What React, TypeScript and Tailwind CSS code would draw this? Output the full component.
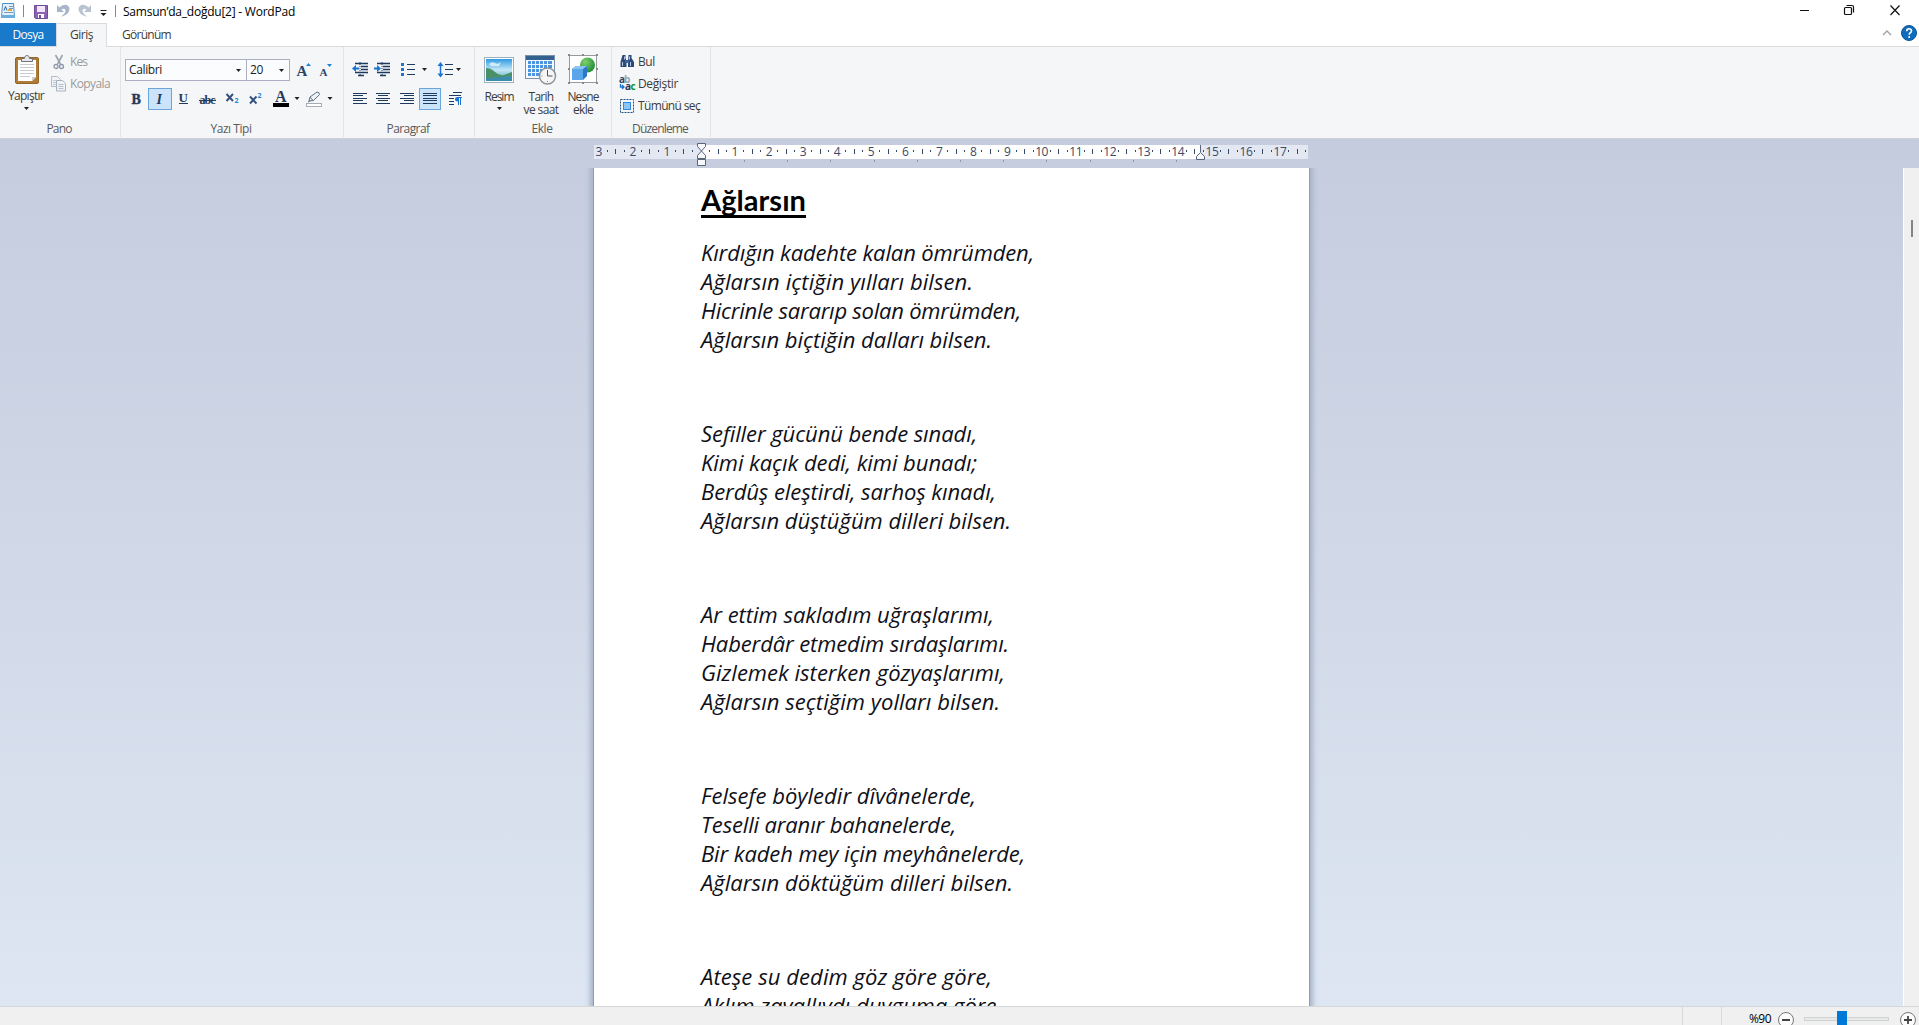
import React, { useLayoutEffect, useRef, useState } from "react";
import { clsx } from "clsx";

// Text that is tracked so it fills exactly `width` pixels
const Fit = ({
  width,
  className,
  children,
}: {
  width: number;
  className?: string;
  children: string;
}) => {
  const ref = useRef<HTMLSpanElement>(null);
  const [spacing, setSpacing] = useState(0);

  useLayoutEffect(() => {
    if (!ref.current) return;
    const natural = ref.current.getBoundingClientRect().width;
    setSpacing((width - natural) / children.length);
  }, []);

  return (
    <span
      ref={ref}
      className={clsx("inline-block whitespace-pre", className)}
      style={{ letterSpacing: spacing }}
    >
      {children}
    </span>
  );
};

const Arrow = ({ className }: { className?: string }) => (
  <svg width="5" height="3" viewBox="0 0 5 3" className={clsx("shrink-0", className)}>
    <path d="M0 0h5L2.5 3z" fill="#222" />
  </svg>
);

const TitleBar = () => (
  <header className="flex h-[23px] items-start bg-white">
    <svg width="118" height="23" viewBox="0 0 118 23" className="shrink-0">
      {/* document icon */}
      <path d="M2.500 3.500h11l1 14h-13z" fill="#e4f1fb" stroke="#4a8fc4" />
      <path d="M1 15h14v3H1z" fill="#6aaedb" />
      <path d="M4 10.500l1.500-4 1.500 4" stroke="#2a69a8" fill="none" />
      <path d="M9 6.500h4M9 8.500h4M4 12.500h9" stroke="#6f9cc0" />
      <path d="M8 9h4v2H8z" fill="#e9a94b" />
      <path d="M23.500 5v12" stroke="#888" />
      {/* save */}
      <path d="M34.500 5.500h13v13h-12l-1-1z" fill="#8d62b5" stroke="#6f4c9b" />
      <path d="M37 6h8v6h-8z" fill="#efe6f7" />
      <path d="M38 14h6v4h-6z" fill="#fff" />
      <path d="M39 15h2v3h-2z" fill="#6f4c9b" />
      {/* undo and redo */}
      <path d="M57 5v7h7l-2.500-2.500c3-2 5 .5 3.500 3-.8 1.500-2 2.500-4 4 5-.5 8.500-4 8.500-7.500C69.500 4.500 63.500 3 59.500 7.500z" fill="#a9b5ca" />
      <path d="M91 5v7h-7l2.500-2.500c-3-2-5 .5-3.500 3 .8 1.500 2 2.500 4 4-5-.5-8.500-4-8.500-7.500C78.500 4.500 84.500 3 88.500 7.500z" fill="#b9c2d1" />
      <path d="M100.500 10.500h6" stroke="#222" />
      <path d="M100.500 13h6l-3 3z" fill="#222" />
      <path d="M115.500 5v12" stroke="#888" />
    </svg>
    <Fit width={172} className="ml-[5px] mt-1 text-black">
      Samsun’da_doğdu[2] - WordPad
    </Fit>
    <svg width="119" height="23" viewBox="1800 0 119 23" className="ml-auto shrink-0" fill="none" stroke="#111">
      <path d="M1799 10.500h10" />
      <rect x="1844.500" y="7.500" width="7" height="7" rx="1" strokeWidth="1.200" />
      <path d="M1846.500 5.500h5.500q1.500 0 1.500 1.500v5.500" strokeWidth="1.200" />
      <path d="M1890.500 5.500l9 9.500M1899.500 5.500l-9 9.500" strokeWidth="1.200" />
    </svg>
  </header>
);

const Tabs = () => (
  <nav className="flex h-6 items-stretch border-b border-[#dadbdc] bg-white">
    <div className="flex w-14 justify-center bg-[#1979ca] pt-1 text-white">
      <Fit width={31}>Dosya</Fit>
    </div>
    <div className="-mb-px flex w-[51px] justify-center border-x border-t border-[#dadbdc] bg-[#f5f6f7] pt-[3px]">
      <Fit width={23}>Giriş</Fit>
    </div>
    <Fit width={49} className="ml-[15px] mt-1">
      Görünüm
    </Fit>
    <svg width="39" height="22" viewBox="1880 24 39 22" className="ml-auto">
      <path d="M1883 36l4-4 4 4" fill="none" stroke="#a0a0a0" strokeWidth="1.300" />
      <circle cx="1909" cy="34" r="7.500" fill="#0f6cbd" stroke="#0b5499" />
      <path d="M1906.700 32.200c0-3.200 4.800-3.200 4.800-.3 0 1.800-2.300 1.800-2.300 3.900" fill="none" stroke="#fff" strokeWidth="1.600" />
      <circle cx="1909.200" cy="37.900" r="1" fill="#fff" />
    </svg>
  </nav>
);

const Group = ({
  label,
  labelWidth,
  className,
  children,
}: {
  label: string;
  labelWidth: number;
  className: string;
  children: React.ReactNode;
}) => (
  <section
    className={clsx(
      "flex h-[90px] shrink-0 flex-col border-r border-[#e2e3e4]",
      className
    )}
  >
    <div className="h-[74px]">{children}</div>
    <div className="pr-[2px] text-center text-[#5a5a5a]">
      <Fit width={labelWidth}>{label}</Fit>
    </div>
  </section>
);

const ClipboardGroup = () => (
  <Group label="Pano" labelWidth={25} className="w-[121px]">
    <div className="flex">
      <div className="flex w-[52px] flex-col items-center pt-[7px]">
        <svg width="26" height="31" viewBox="0 0 26 31" className="ml-[2px]">
          <rect x="1.500" y="3.500" width="23" height="26" rx="1.500" fill="#b07b35" stroke="#94652a" />
          <path d="M4 6h18v17l-4 4H4z" fill="#fff" />
          <path d="M18 27v-4h4z" fill="#c9ced6" />
          <path d="M6 10.500h14M6 13.500h14M6 16.500h14M6 19.500h14M6 22.500h10" stroke="#c6cbd3" />
          <path d="M7.500 7.500v-3h3c0-4 5-4 5 0h3v3z" fill="#e6e8ea" stroke="#6f7377" />
        </svg>
        <Fit width={36} className="mt-[3px]">
          Yapıştır
        </Fit>
        <Arrow className="mt-[3px]" />
      </div>
      <div className="pt-1.5 text-[#9a9a9a]">
        <div className="flex h-[22px]">
          <svg width="18" height="18" viewBox="0 0 18 18">
            <path d="M3.500 2l5 9M10.500 2l-5 9" stroke="#9ba2b2" strokeWidth="1.600" />
            <circle cx="4" cy="13.500" r="2" fill="none" stroke="#8f97aa" strokeWidth="1.300" />
            <circle cx="9.500" cy="13.500" r="2" fill="none" stroke="#8f97aa" strokeWidth="1.300" />
          </svg>
          <Fit width={17} className="mt-px">
            Kes
          </Fit>
        </div>
        <div className="flex h-[22px]">
          <svg width="18" height="18" viewBox="0 0 18 18" className="overflow-visible">
            <path d="M-.5 1.500h6l3 3v7h-9z" fill="#f1f3f6" stroke="#b3bac8" />
            <path d="M1 5.500h4M1 7.500h4M1 9.500h4" stroke="#c5cbd5" />
            <path d="M4.500 5.500h6l3 3v7.500h-9z" fill="#f1f3f6" stroke="#a9b1c1" />
            <path d="M6.500 9.500h5M6.500 11.500h5M6.500 13.500h5" stroke="#b7bfcd" />
          </svg>
          <Fit width={40} className="mt-px">
            Kopyala
          </Fit>
        </div>
      </div>
    </div>
  </Group>
);

const FontGroup = () => (
  <Group label="Yazı Tipi" labelWidth={41} className="w-[223px]">
    <div className="flex pl-1 pt-3 text-[#222]">
      <div className="flex h-[22px] w-[122px] items-center justify-between border border-[#abadc3] bg-[#fbfcfe] pl-[3px] pr-[5px]">
        <Fit width={33}>Calibri</Fit>
        <Arrow />
      </div>
      <div className="-ml-px flex h-[22px] w-11 items-center justify-between border border-[#abadc3] bg-[#fbfcfe] pl-[3px] pr-[5px]">
        <Fit width={13}>20</Fit>
        <Arrow />
      </div>
      <svg width="44" height="22" viewBox="295 59 44 22" className="ml-[5px]" fill="#2b4568">
        <text x="296.500" y="76" className="font-['Liberation_Serif'] text-[15px] font-bold">A</text>
        <text x="319.500" y="76" className="font-['Liberation_Serif'] text-[11px] font-bold">A</text>
        <path d="M306 66h5l-2.500-3zM327 64h5l-2.500 3z" fill="#1f83d6" />
      </svg>
    </div>
    <svg width="215" height="24" viewBox="121 87 215 24" className="mt-[6px]" fill="#24395c">
      <rect x="148.500" y="88.500" width="23" height="21" fill="#cce4fb" stroke="#6aa6dc" />
      <g className="font-['Liberation_Serif'] font-bold">
        <text x="131.500" y="103.500" className="text-[14px]" stroke="#24395c" strokeWidth=".4">B</text>
        <text x="156.500" y="103.500" className="text-[14px] italic">I</text>
        <text x="178.500" y="102" className="text-[13px]">U</text>
        <text x="199.500" y="104" textLength="16" className="text-[12px]">abc</text>
        <text x="275" y="102" className="text-[16px]">A</text>
      </g>
      <path d="M179 103.500h9M199 100.500h17" stroke="#24395c" />
      <path d="M226.500 94l6.500 7M233 94l-6.500 7M250 96.500l6.500 7M256.500 96.500l-6.500 7" stroke="#33507c" strokeWidth="1.900" />
      <text x="234.500" y="103" fill="#1f83d6" className="text-[7px] font-bold">2</text>
      <text x="257.500" y="98" fill="#1f83d6" className="text-[7px] font-bold">2</text>
      <path d="M273 103h16v4h-16z" fill="#000" />
      <path d="M294.500 97h5l-2.500 3zM327.500 97h5l-2.500 3z" fill="#222" />
      <path d="M309 101l1-4 7-5q2.500 0 2.500 2.500l-6 6zM310 97l3 3.500M308 102l2-1" fill="#eef2f7" stroke="#5e6f88" />
      <rect x="306.500" y="103.500" width="15" height="3" fill="#fff" stroke="#a6adb8" />
    </svg>
  </Group>
);

const ParagraphGroup = () => (
  <Group label="Paragraf" labelWidth={43} className="w-[131px]">
    <svg width="130" height="60" viewBox="344 55 130 60" className="mt-[8px]" fill="none" stroke="#1e3a5f">
      {/* indent */}
      <path d="M355 63.500h13M361 66.500h7M361 69.500h7M355 72.500h13M358 75.500h6" strokeWidth="1.300" />
      <path d="M360 62v14M382 62v14" strokeDasharray="1 1" />
      <path d="M377 63.500h13M383 66.500h7M383 69.500h7M377 72.500h13M380 75.500h6" strokeWidth="1.300" />
      <path d="M352 68.500l4-3.500v2.500h3v2h-3v2.500zM381 68.500l-4-3.500v2.500h-3v2h3v2.500z" fill="#1a73d0" stroke="none" />
      {/* bullets */}
      <path d="M401 63h3v3h-3zM401 68h3v3h-3zM401 73h3v3h-3z" fill="#1a73d0" stroke="none" />
      <path d="M407 64.500h8M407 69.500h8M407 74.500h8M445 64.500h8M445 69.500h8M445 74.500h8" />
      {/* line spacing */}
      <path d="M440.500 64v12" stroke="#1a73d0" strokeWidth="1.500" />
      <path d="M437.500 66l3-4 3 4zM437.500 73.500l3 4 3-4z" fill="#1a73d0" stroke="none" />
      <path d="M422 68h5l-2.500 3zM456 68h5l-2.500 3z" fill="#222" stroke="none" />
      {/* alignment */}
      <rect x="419.500" y="88.500" width="21" height="21" fill="#cce4fb" stroke="#6aa6dc" />
      <path d="M353 93.500h14M353 95.500h10M353 98.500h14M353 100.500h10M353 103.500h14" />
      <path d="M376 93.500h14M378 95.500h10M376 98.500h14M378 100.500h10M376 103.500h14" />
      <path d="M400 93.500h14M404 95.500h10M400 98.500h14M404 100.500h10M400 103.500h14" />
      <path d="M423 93.500h14M423 95.500h14M423 98.500h14M423 100.500h14M423 103.500h14" />
      <path d="M453 92.500h9M449 95.500h12M449 98.500h5M449 101.500h5M449 104.500h5" />
      <path d="M458.500 97v8M460.500 97v8M457 97.500h5" stroke="#1a73d0" />
      <path d="M458 97q-3 0-3 2.200t3 2.300z" fill="#1a73d0" stroke="none" />
    </svg>
  </Group>
);

const InsertGroup = () => (
  <Group label="Ekle" labelWidth={21} className="w-[137px]">
    <div className="flex pl-[3px] pt-[6px] text-center leading-[13px]">
      <div className="flex w-[42px] flex-col items-center">
        <svg width="32" height="32" viewBox="484 53 32 32">
          <defs>
            <linearGradient id="sky" x1="0" y1="0" x2="0" y2="1">
              <stop offset="0" stopColor="#2f9be4" />
              <stop offset=".5" stopColor="#c3e6f7" />
              <stop offset="1" stopColor="#4fa3b0" />
            </linearGradient>
          </defs>
          <rect x="485.500" y="57.500" width="29" height="25" fill="#fff" stroke="#9bb0be" />
          <rect x="487" y="59" width="26" height="22" fill="url(#sky)" />
          <path d="M487 68q5 0 9 4t9 3l8-3v4l-9 2-17 1z" fill="#4a9168" />
          <path d="M487 78l26-2v5h-26z" fill="#3d8cab" />
          <path d="M490 64q3-3 6-1t6-1l-2 4h-8z" fill="#e6f5fc" opacity=".8" />
        </svg>
        <Fit width={29} className="mt-[5px]">
          Resim
        </Fit>
        <Arrow className="mt-[4px]" />
      </div>
      <div className="flex w-[42px] flex-col items-center">
        <svg width="32" height="32" viewBox="526 53 32 32">
          <rect x="526.500" y="55.500" width="29" height="23" fill="#f6fafe" stroke="#7891ad" />
          <path d="M527 56h28v4h-28z" fill="#32608f" />
          <path d="M529 61h24v15h-24z" fill="#4b93dc" />
          <path d="M529 64.500h24M529 68.500h24M529 72.500h24M532.500 61v15M536.500 61v15M540.500 61v15M544.500 61v15M548.500 61v15" stroke="#eaf4fd" />
          <circle cx="548.500" cy="76" r="8" fill="#f5f5f5" stroke="#8f9499" strokeWidth="1.500" />
          <path d="M548.500 70v6h5" fill="none" stroke="#555" />
          <path d="M548.500 82v-1M542.500 76h1" stroke="#888" />
        </svg>
        <Fit width={25} className="mt-[5px]">
          Tarih
        </Fit>
        <Fit width={35}>ve saat</Fit>
      </div>
      <div className="flex w-[42px] flex-col items-center">
        <svg width="32" height="32" viewBox="567 53 32 32">
          <defs>
            <radialGradient id="ball" cx=".35" cy=".3" r=".8">
              <stop offset="0" stopColor="#7fd26f" />
              <stop offset="1" stopColor="#17862c" />
            </radialGradient>
          </defs>
          <rect x="569.500" y="55.500" width="27" height="27" fill="#fff" stroke="#9a9a9a" />
          <circle cx="587.500" cy="65" r="7.500" fill="url(#ball)" />
          <path d="M572 69l4-3h11v10l-4 4h-11z" fill="#2b78c9" />
          <path d="M572 69h11v11h-11z" fill="#5ba5ea" />
          <path d="M572 69l4-3h11l-4 3z" fill="#8cc4f5" />
          <path d="M568 54h2v2h-2zM596 54h2v2h-2zM568 82h2v2h-2zM596 82h2v2h-2zM582 54h2v2h-2zM582 82h2v2h-2zM568 68h2v2h-2zM596 68h2v2h-2z" fill="#888" />
        </svg>
        <Fit width={31} className="mt-[5px]">
          Nesne
        </Fit>
        <Fit width={20}>ekle</Fit>
      </div>
    </div>
  </Group>
);

const EditingGroup = () => (
  <Group label="Düzenleme" labelWidth={56} className="w-[99px]">
    <div className="flex flex-col pl-[7px] pt-1.5">
      <div className="flex h-[22px] gap-[3px]">
        <svg width="16" height="18" viewBox="0 0 16 18">
          <path d="M3.500 2h3v3l1 3v6h-6V9zM9.500 2h3v3l2.500 4v5H9V8z" fill="#2b4a78" />
          <path d="M6 7h4v3H6z" fill="#3e639a" />
          <path d="M3.500 9v4M11.500 9v4M5.500 3.500v3M10.500 3.500v3" stroke="#b5cbe8" />
        </svg>
        <Fit width={17} className="mt-px">
          Bul
        </Fit>
      </div>
      <div className="flex h-[22px] gap-[3px]">
        <svg width="17" height="18" viewBox="0 0 17 18" className="-mr-px overflow-visible font-['Open_Sans'] text-[10px] font-bold">
          <text x="0" y="8" fill="#2b4568">a</text>
          <text x="5" y="8" fill="#9aa3af">b</text>
          <text x="6" y="15" fill="#24395c">a</text>
          <text x="11.500" y="15" fill="#17901f">c</text>
          <path d="M1.500 9v3h3M3 10l2 2-2 2" fill="none" stroke="#1a73d0" strokeWidth="1.300" />
        </svg>
        <Fit width={40} className="mt-px">
          Değiştir
        </Fit>
      </div>
      <div className="flex h-[22px] gap-[3px]">
        <svg width="16" height="18" viewBox="0 0 16 18">
          <rect x="1.500" y="2.500" width="13" height="13" fill="none" stroke="#1f4f85" strokeDasharray="2 1" />
          <rect x="4.500" y="5.500" width="7" height="7" fill="#8cc6f7" stroke="#2f8be0" />
        </svg>
        <Fit width={62} className="mt-px">
          Tümünü seç
        </Fit>
      </div>
    </div>
  </Group>
);

const Ribbon = () => (
  <div className="flex h-[92px] border-b border-[#cdd0d5] bg-[#f5f6f7]">
    <ClipboardGroup />
    <FontGroup />
    <ParagraphGroup />
    <InsertGroup />
    <EditingGroup />
  </div>
);

const CM = 34.06;
const marks = Array.from({ length: 21 }, (_, i) => i - 3);

const Ruler = () => (
  <svg width="716" height="29" viewBox="594 139 716 29" className="ml-[594px] block shrink-0">
    <path d="M594 145h714v14H594z" fill="#e3e8f3" />
    <path d="M701 145h499v14H701z" fill="#fff" />
    {marks.map((n) => {
      const x = 701 + n * CM;
      return (
        <g key={n} fill="#3b4a66">
          {n !== 0 && n < 18 && (
            <text x={x} y="156" textAnchor="middle" className={clsx("text-[12px]", n > 9 && "tracking-[-0.4px]")}>
              {Math.abs(n)}
            </text>
          )}
          {n < 18 && (
            <>
              <rect x={Math.round(x + 8)} y="150" width="1" height="2" />
              <rect x={Math.round(x + 16.5)} y="149" width="1" height="5" />
              <rect x={Math.round(x + 25)} y="150" width="1" height="2" />
            </>
          )}
        </g>
      );
    })}
    {Array.from({ length: 11 }, (_, i) => (
      <rect key={i} x={Math.round(744 + i * 43.2)} y="160" width="1" height="2" fill="#8f99ac" />
    ))}
    {/* indent handles */}
    <g fill="#f7f8fb" stroke="#5a6577">
      <path d="M697.500 143.500h8v3l-4 4.500-4-4.500z" />
      <path d="M697.500 158.500v-3l4-4.500 4 4.500v3z" />
      <path d="M697.500 159.500h8v6h-8z" />
      <path d="M1200.500 145v7" />
      <path d="M1196.500 159.500v-3l4-4 4 4v3z" />
    </g>
  </svg>
);

const stanzas: [string, number][][] = [
  [
    ["Kırdığın kadehte kalan ömrümden,", 333],
    ["Ağlarsın içtiğin yılları bilsen.", 272],
    ["Hicrinle sararıp solan ömrümden,", 320],
    ["Ağlarsın biçtiğin dalları bilsen.", 291],
  ],
  [
    ["Sefiller gücünü bende sınadı,", 276],
    ["Kimi kaçık dedi, kimi bunadı;", 276],
    ["Berdûş eleştirdi, sarhoş kınadı,", 295],
    ["Ağlarsın düştüğüm dilleri bilsen.", 310],
  ],
  [
    ["Ar ettim sakladım uğraşlarımı,", 293],
    ["Haberdâr etmedim sırdaşlarımı.", 308],
    ["Gizlemek isterken gözyaşlarımı,", 304],
    ["Ağlarsın seçtiğim yolları bilsen.", 299],
  ],
  [
    ["Felsefe böyledir dîvânelerde,", 275],
    ["Teselli aranır bahanelerde,", 255],
    ["Bir kadeh mey için meyhânelerde,", 324],
    ["Ağlarsın döktüğüm dilleri bilsen.", 312],
  ],
  [
    ["Ateşe su dedim göz göre göre,", 291],
    ["Aklım zavallıydı duyguma göre,", 301],
  ],
];

const Page = () => (
  <article className="ml-[594px] w-[715px] shrink-0 bg-white pl-[107px] shadow-[0_0_0_1px_#8f9cb3,0_0_5px_4px_#a9b4ca]">
    <h1 className="h-[70px] pt-[13px] font-['Lato',sans-serif] text-[29px] font-bold leading-[38px] text-black">
      <Fit
        width={105}
        className="underline decoration-[3px] underline-offset-[4px] [text-decoration-skip-ink:none]"
      >
        Ağlarsın
      </Fit>
    </h1>
    <div className="flex flex-col gap-[65px] text-[22px] italic leading-[29px] text-[#101018]">
      {stanzas.map((lines, i) => (
        <div key={i} className="flex flex-col items-start">
          {lines.map(([text, width]) => (
            <Fit key={text} width={width}>
              {text}
            </Fit>
          ))}
        </div>
      ))}
    </div>
  </article>
);

const StatusBar = () => (
  <footer className="flex h-[19px] shrink-0 items-start justify-end overflow-hidden border-t border-[#d5d8d8] bg-[#f0f0f0]">
    <div className="h-full w-[40px] border-x border-[#d9d9d9]" />
    <Fit width={22} className="ml-[27px] mt-[4px] text-black">
      %90
    </Fit>
    <svg width="148" height="18" viewBox="1771 1007 148 18">
      <g fill="#fbfbfb" stroke="#777">
        <circle cx="1786" cy="1020" r="7.500" />
        <circle cx="1908" cy="1020" r="7.500" />
      </g>
      <path d="M1782 1020h8M1904 1020h8M1908 1016v8" stroke="#444" strokeWidth="1.800" />
      <rect x="1804.500" y="1017.500" width="84" height="3" fill="#e7eaea" stroke="#d2d2d2" />
      <path d="M1837 1011h10v14h-10z" fill="#0078d7" />
    </svg>
  </footer>
);

export default function App() {
  return (
    <div className="flex h-[1025px] w-[1919px] flex-col overflow-hidden bg-[#f5f6f7] font-['Open_Sans',sans-serif] text-[12px] leading-4 text-[#3c3c3c]">
      <TitleBar />
      <Tabs />
      <Ribbon />
      <main className="flex min-h-0 flex-1 flex-col bg-linear-to-b from-[#c5ccde] to-[#dde6f2]">
        <Ruler />
        <div className="flex min-h-0 flex-1 overflow-hidden">
          <Page />
          <div className="ml-auto w-4 border-l border-white bg-[#f0f0f0] pl-[7px] pt-[52px]">
            <div className="h-[17px] w-[2px] bg-[#858585]" />
          </div>
        </div>
      </main>
      <StatusBar />
    </div>
  );
}
